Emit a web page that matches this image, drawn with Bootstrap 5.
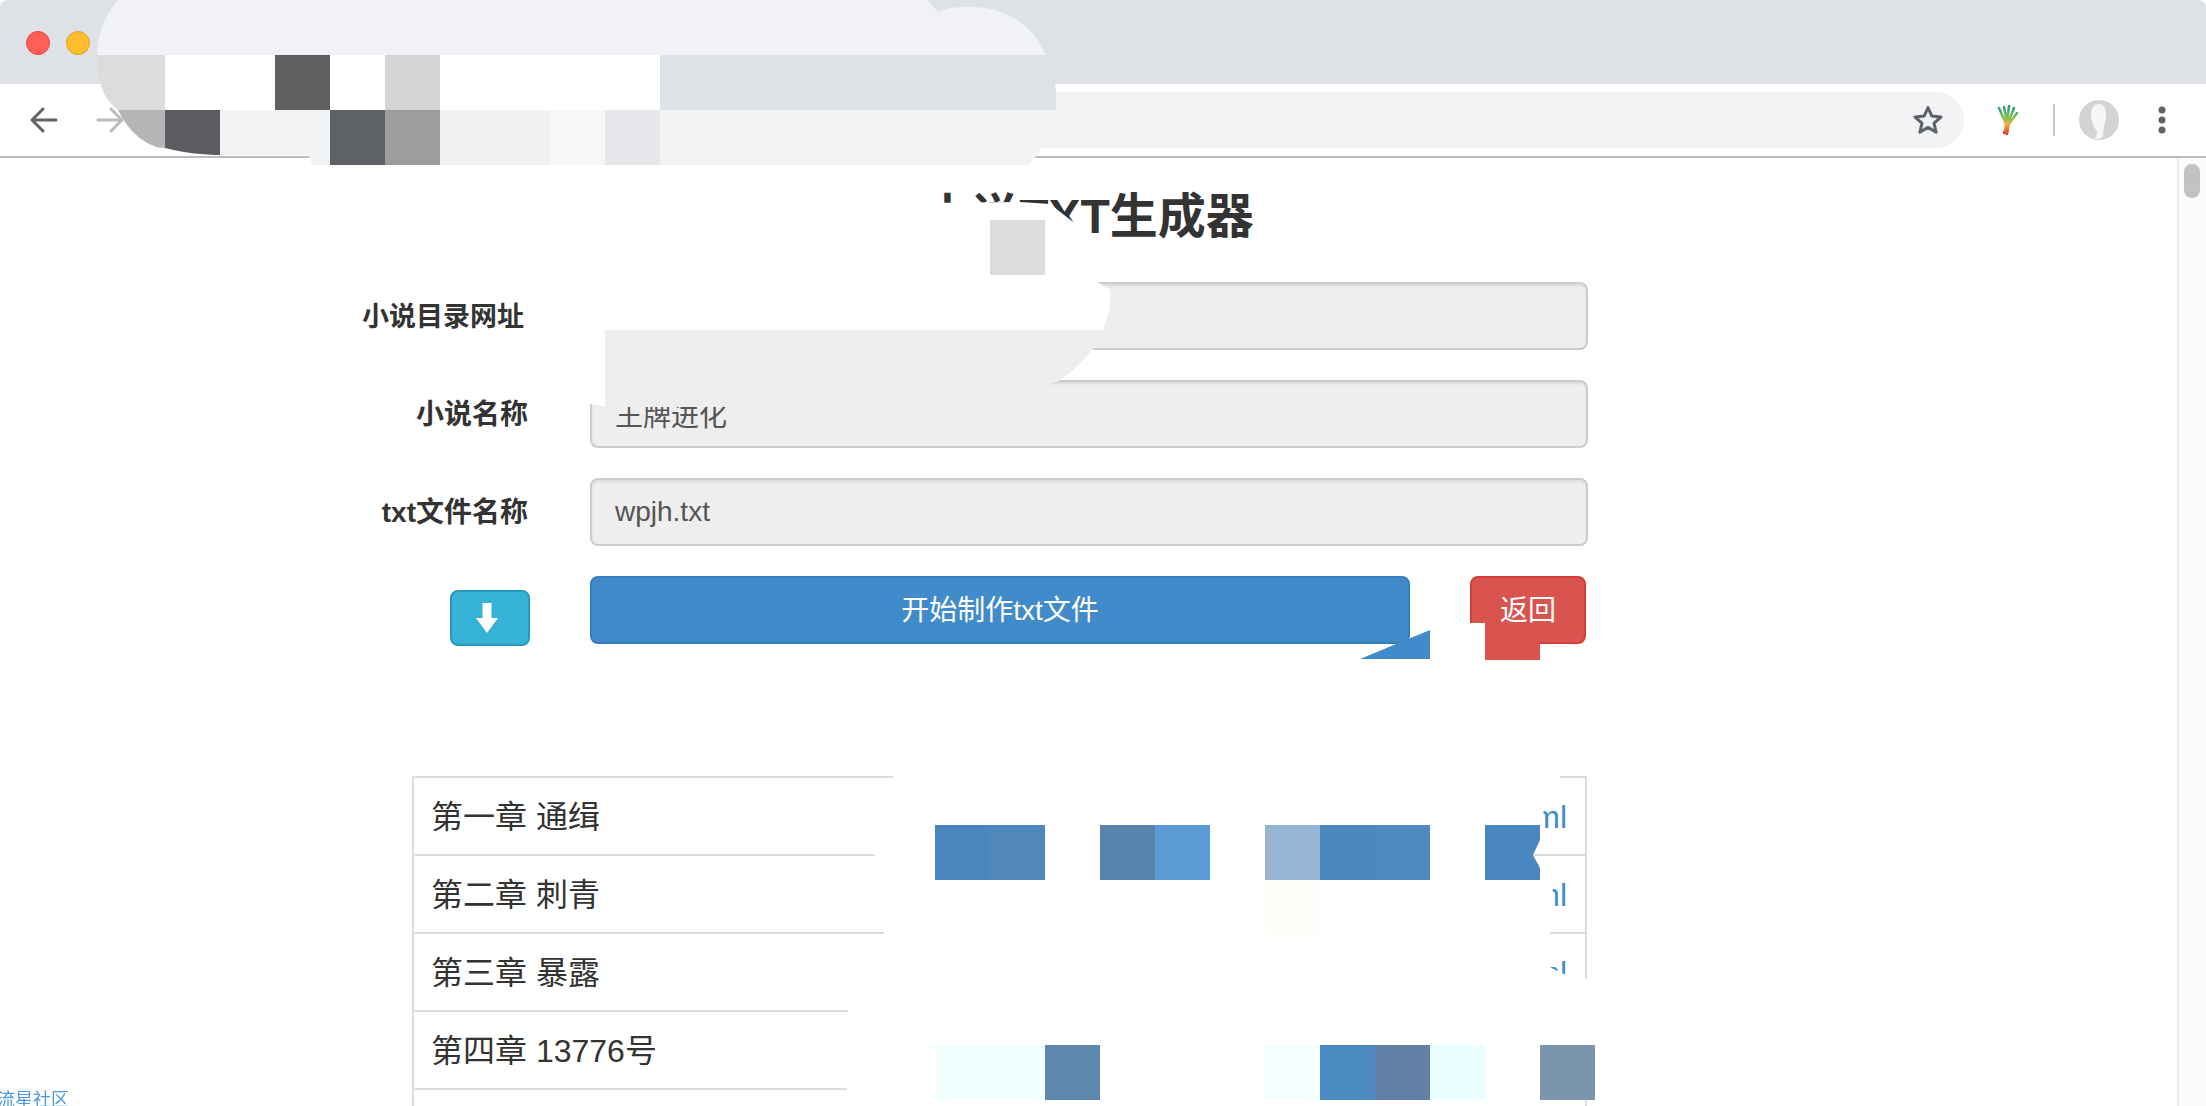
<!DOCTYPE html>
<html lang="zh-CN">
<head>
<meta charset="utf-8">
<title>小说TXT生成器</title>
<link href="https://cdn.jsdelivr.net/npm/bootstrap@5.3.0/dist/css/bootstrap.min.css" rel="stylesheet">
<style>
html,body{height:1106px;overflow:hidden;background:#fff}
body{font-family:"Liberation Sans","Noto Sans CJK SC",sans-serif;color:#333;position:relative}
.win-shell{width:2206px;height:1106px;border-radius:8px 8px 0 0;overflow:hidden}
.tab-strip{height:84px;background:#dee1e6;padding-left:26px;gap:16px}
.traffic{width:24px;height:24px;border-radius:50%;margin-top:31px}
.traffic-red{background:#ff5f57;border:1px solid #e0443e}
.traffic-yellow{background:#ffbd2e;border:1px solid #dea123}
.tool-bar{height:74px;background:#fff;border-bottom:2px solid #bdbdbd;padding:8px 0 8px 30px}
.nav-ic{width:28px;height:28px;flex:none}
.nav-fwd{margin-left:38px}
.addr-bar{width:1814px;height:56px;margin-left:26px;background:#f1f3f4;border-radius:28px;padding-right:20px}
.ext-ic{width:24px;height:32px;margin-left:31px}
.tool-sep{width:2px;height:32px;background:#c9c9c9;margin-left:34px}
.avatar-ic{width:40px;height:40px;margin-left:24px}
.menu-ic{width:8px;height:28px;margin-left:39px}
.page-main{width:2177px;height:948px;overflow:hidden}
.page-title{font-size:48px;font-weight:700;line-height:53px;color:#333;margin:32px 0 39px;text-align:center}
.form-area{margin-left:350px;width:1240px}
.form-line{height:68px;margin-bottom:30px;gap:60px}
.form-tag{width:180px;padding:2px 2px 0 0;font-size:28px;font-weight:700;line-height:66px;text-align:right;color:#333;margin:0;white-space:nowrap;height:68px}
.form-tag-first{padding-right:6px;font-size:27px}
.form-box{width:998px;height:68px;background:#eee;border:2px solid #ccc;border-radius:8px;font-size:28px;color:#555;padding:0 23px;box-shadow:inset 0 2px 2px rgba(0,0,0,.075);font-family:inherit}
.form-box:focus{outline:0}
.btn-down-slot{width:180px;padding-top:14px}
.btn-down{width:80px;height:56px;background:#35b2d6;border:2px solid #269abc;border-radius:8px;padding:0 6px 0 0;margin-left:100px}
.btn-make,.btn-back{height:68px;font-size:28px;color:#fff;border-radius:8px;padding:2px 0 0;font-family:inherit}
.btn-make{width:820px;background:#428bca;border:2px solid #357ebd}
.btn-back{width:116px;background:#d9534f;border:2px solid #d43f3a;margin-left:0}
.btn-make:hover{background:#428bca;color:#fff}.btn-back:hover{background:#d9534f;color:#fff}
.chap-wrap{margin:132px 0 0 412px;width:1175px}
.chap-table{border-collapse:collapse;width:1175px;margin:0;table-layout:fixed;border-top:2px solid #ddd;border-left:2px solid #ddd;border-right:2px solid #ddd}
.chap-table td{height:78px;font-size:32px;line-height:40px;color:#333;border:0;border-bottom:2px solid #ddd;padding:2px 18px 0 17px;vertical-align:middle;box-shadow:none}
.chap-table a{color:#428bca;text-decoration:none}
.scroll-rail{width:29px;height:948px;background:#fbfbfb;border-left:2px solid #e8e8e8;padding:6px 0 0 5px}
.scroll-thumb{width:16px;height:34px;background:#c2c2c2;border-radius:8px}
.site-link{position:fixed;left:-3px;bottom:-4px;font-size:18px;line-height:20px;color:#4a9be0;text-decoration:none}
.redact{position:absolute;left:0;top:0;width:2206px;height:1106px;pointer-events:none}
</style>
</head>
<body>
<div class="win-shell">
  <div class="tab-strip d-flex">
    <span class="traffic traffic-red"></span>
    <span class="traffic traffic-yellow"></span>
  </div>
  <div class="tool-bar d-flex align-items-center">
    <svg class="nav-ic" viewBox="0 0 28 28" fill="none" stroke="#5f6368" stroke-width="3" stroke-linecap="round" stroke-linejoin="round"><path d="M26 14H3M13 3 2 14l11 11"/></svg>
    <svg class="nav-ic nav-fwd" viewBox="0 0 28 28" fill="none" stroke="#bdbdbd" stroke-width="3" stroke-linecap="round" stroke-linejoin="round"><path d="M2 14h23M15 3l11 11-11 11"/></svg>
    <div class="addr-bar d-flex align-items-center justify-content-end">
      <svg width="32" height="32" viewBox="0 0 32 32" fill="none" stroke="#5f6368" stroke-width="3" stroke-linejoin="round"><path d="M16 3.500l3.800 8.600 9.200.9-7 6.100 2.100 9.200L16 23.400l-8.100 4.900 2.100-9.200-7-6.100 9.200-.9z"/></svg>
    </div>
    <svg class="ext-ic" viewBox="0 0 24 32" fill="none" stroke-width="2.500" stroke-linecap="round">
      <defs><linearGradient id="extGrad" gradientUnits="userSpaceOnUse" x1="0" y1="2" x2="0" y2="30"><stop offset="0" stop-color="#1f9d7a"/><stop offset=".45" stop-color="#8fc04a"/><stop offset=".65" stop-color="#f0b040"/><stop offset="1" stop-color="#dd3a30"/></linearGradient></defs>
      <path stroke="url(#extGrad)" d="M4 4l7 16M9 3l3 16M14 2l-2 16M19 4l-6 15M22 9 14 20M13 19l-4 10M14 19l-2 11M11 20l-1 9"/>
    </svg>
    <span class="tool-sep"></span>
    <svg class="avatar-ic" viewBox="0 0 40 40"><circle cx="20" cy="20" r="20" fill="#d3d3d3"/><path d="M12 14c0-7 4-10 8-10s7 3 7 10c0 6-1 10-2 12l-1 9c0 2-2 4-5 4h-4c2-2 3-5 3-8-3-3-6-10-6-17z" fill="#f4f6f7"/></svg>
    <svg class="menu-ic" viewBox="0 0 8 28" fill="#5f6368"><circle cx="4" cy="4" r="3.500"/><circle cx="4" cy="14" r="3.500"/><circle cx="4" cy="24" r="3.500"/></svg>
  </div>
  <div class="d-flex">
    <main class="page-main">
      <h1 class="page-title">小说TXT生成器</h1>
      <form class="form-area">
        <div class="form-line d-flex">
          <label class="form-tag form-tag-first">小说目录网址</label>
          <input class="form-box" type="text" readonly>
        </div>
        <div class="form-line d-flex">
          <label class="form-tag">小说名称</label>
          <input class="form-box" type="text" value="王牌进化" readonly>
        </div>
        <div class="form-line d-flex">
          <label class="form-tag">txt文件名称</label>
          <input class="form-box" type="text" value="wpjh.txt" readonly>
        </div>
        <div class="form-line d-flex">
          <div class="btn-down-slot">
            <button type="button" class="btn btn-down d-flex align-items-center justify-content-center">
              <svg width="22" height="30" viewBox="0 0 22 30" fill="#fff"><path d="M6.500 0h9v15H22L11 30 0 15h6.500z"/></svg>
            </button>
          </div>
          <button type="button" class="btn btn-make">开始制作txt文件</button>
          <button type="button" class="btn btn-back">返回</button>
        </div>
      </form>
      <div class="chap-wrap">
        <table class="table chap-table">
          <tbody>
            <tr><td>第一章 通缉</td><td class="text-end"><a href="#">1.html</a></td></tr>
            <tr><td>第二章 刺青</td><td class="text-end"><a href="#">2.html</a></td></tr>
            <tr><td>第三章 暴露</td><td class="text-end"><a href="#">3.html</a></td></tr>
            <tr><td>第四章 13776号</td><td class="text-end"><a href="#">4.html</a></td></tr>
            <tr><td></td><td></td></tr>
          </tbody>
        </table>
      </div>
    </main>
    <div class="scroll-rail"><div class="scroll-thumb"></div></div>
  </div>
</div>
<a class="site-link" href="#">流星社区</a>

<svg class="redact" viewBox="0 0 2206 1106" aria-hidden="true">
  <defs>
    <clipPath id="blobTop"><path d="M118,0C105,15 97,35 97,55C97,85 105,100 118,110C130,135 150,148 165,148C185,153 205,155 220,155L309,155L312,165L1029,165L1041,150L1056,110L1056,90C1050,50 1030,15 985,8C960,5 945,8 938,12L927,0Z"/></clipPath>
    <clipPath id="blobMid"><path d="M560,165L560,404L590,404L607,407L860,406C920,402 1000,395 1056,382C1065,378 1080,365 1092,350C1105,330 1112,310 1110,290L1086,275L1086,232L1068,218L1050,204L1020,202L925,203L900,165Z"/></clipPath>
    <clipPath id="blobLow"><path d="M895,770L1555,770L1560,777L1545,800L1540,840L1533,855L1540,868L1553,885L1550,933L1550,960L1545,965L1566,975L1595,980L1595,1100L850,1100L847,1089L848,1011L884,933L875,855L893,777Z"/></clipPath>
  </defs>
  <g clip-path="url(#blobTop)">
    <rect x="90" y="0" width="980" height="55" fill="#f0f2f5"/>
    <rect x="90" y="55" width="75" height="55" fill="#dcdcdd"/>
    <rect x="165" y="55" width="110" height="55" fill="#fff"/>
    <rect x="275" y="55" width="55" height="55" fill="#5f5f60"/>
    <rect x="330" y="55" width="55" height="55" fill="#fff"/>
    <rect x="385" y="55" width="55" height="55" fill="#d5d5d6"/>
    <rect x="440" y="55" width="220" height="55" fill="#fff"/>
    <rect x="660" y="55" width="400" height="55" fill="#dee1e6"/>
    <rect x="90" y="110" width="75" height="55" fill="#b5b5b5"/>
    <rect x="165" y="110" width="55" height="55" fill="#5c5d60"/>
    <rect x="220" y="110" width="110" height="55" fill="#f1f3f5"/>
    <rect x="330" y="110" width="55" height="55" fill="#5e6166"/>
    <rect x="385" y="110" width="55" height="55" fill="#9c9d9f"/>
    <rect x="440" y="110" width="110" height="55" fill="#eff1f3"/>
    <rect x="550" y="110" width="55" height="55" fill="#f5f7f9"/>
    <rect x="605" y="110" width="55" height="55" fill="#e5e7ea"/>
    <rect x="660" y="110" width="400" height="55" fill="#f1f3f4"/>
  </g>
  <g clip-path="url(#blobMid)">
    <rect x="560" y="165" width="560" height="250" fill="#fff"/>
    <rect x="605" y="330" width="510" height="85" fill="#eee"/>
    <rect x="990" y="220" width="55" height="55" fill="#dcdcdc"/>
  </g>
  <polygon points="1360,659 1430,630 1430,659" fill="#428bca"/>
  <rect x="1465" y="623" width="20" height="26" fill="#fff"/>
  <rect x="1485" y="640" width="55" height="20" fill="#d9534f"/>
  <g clip-path="url(#blobLow)">
    <rect x="840" y="765" width="760" height="340" fill="#fff"/>
    <rect x="935" y="825" width="55" height="55" fill="#4a86bd"/>
    <rect x="990" y="825" width="55" height="55" fill="#5088bb"/>
    <rect x="1100" y="825" width="55" height="55" fill="#5783ad"/>
    <rect x="1155" y="825" width="55" height="55" fill="#5c9ad6"/>
    <rect x="1265" y="825" width="55" height="55" fill="#95b5d3"/>
    <rect x="1320" y="825" width="55" height="55" fill="#4b86bd"/>
    <rect x="1375" y="825" width="55" height="55" fill="#4e89bf"/>
    <rect x="1485" y="825" width="55" height="55" fill="#4a86bf"/>
    <rect x="1265" y="880" width="55" height="55" fill="#fcfffa"/>
    <rect x="935" y="1045" width="110" height="55" fill="#f2ffff"/>
    <rect x="1045" y="1045" width="55" height="55" fill="#5d87ab"/>
    <rect x="1265" y="1045" width="55" height="55" fill="#f5ffff"/>
    <rect x="1320" y="1045" width="55" height="55" fill="#4b89c1"/>
    <rect x="1375" y="1045" width="55" height="55" fill="#6280a5"/>
    <rect x="1430" y="1045" width="55" height="55" fill="#eaffff"/>
    <rect x="1540" y="1045" width="55" height="55" fill="#7b95ae"/>
  </g>
</svg>
<script src="https://cdn.jsdelivr.net/npm/bootstrap@5.3.0/dist/js/bootstrap.bundle.min.js"></script>
</body>
</html>
